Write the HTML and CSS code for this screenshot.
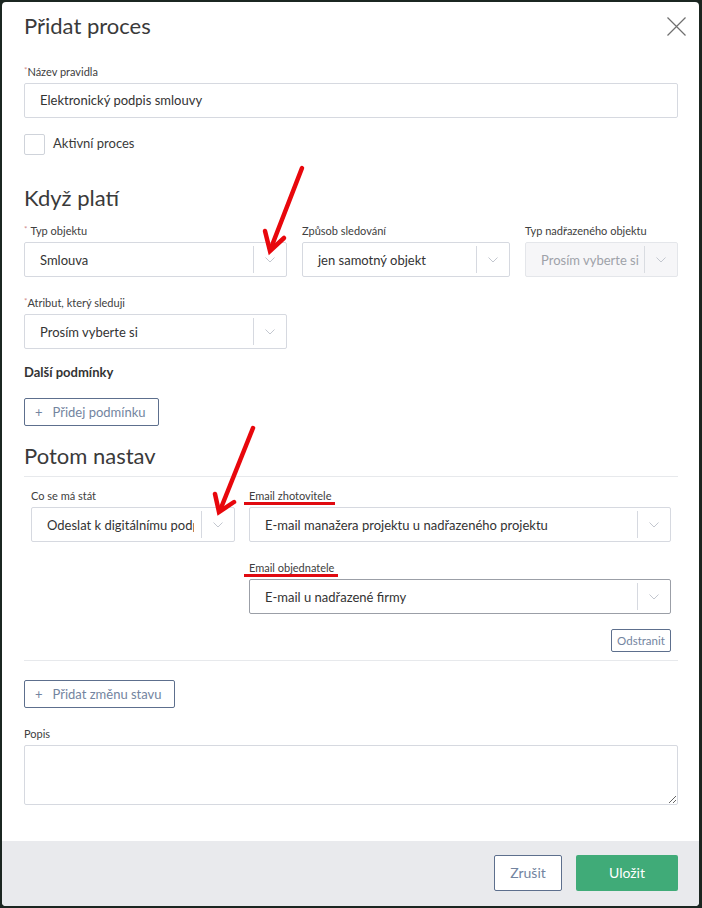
FILE: index.html
```html
<!DOCTYPE html>
<html lang="cs">
<head>
<meta charset="utf-8">
<title>Přidat proces</title>
<link rel="stylesheet" href="styles.css">
</head>
<body>
<div class="modal">
  <div class="modal-body">
    <div class="modal-head">
      <h1 class="title">Přidat proces</h1>
      <span class="close" aria-label="Zavřít">
        <svg width="19" height="19" viewBox="0 0 19 19"><path d="M0.5 0.5 L18.5 18.5 M18.5 0.5 L0.5 18.5" stroke="#6f6f6f" stroke-width="1.2" fill="none"/></svg>
      </span>
    </div>

    <div class="field f-name">
      <label class="lbl"><span class="req">*</span>Název pravidla</label>
      <div class="input">Elektronický podpis smlouvy</div>
    </div>

    <div class="check-row">
      <span class="checkbox"></span>
      <span class="check-label">Aktivní proces</span>
    </div>

    <h2 class="section">Když platí</h2>

    <div class="grid3">
      <div class="field">
        <label class="lbl"><span class="req sp">*</span>Typ objektu</label>
        <div class="select"><span class="val">Smlouva</span><span class="sep"></span><span class="chev"><svg width="10" height="6" viewBox="0 0 10 6"><path d="M0.5 0.5 L5 5 L9.5 0.5" stroke="#c3c7cf" fill="none"/></svg></span></div>
      </div>
      <div class="field">
        <label class="lbl">Způsob sledování</label>
        <div class="select"><span class="val">jen samotný objekt</span><span class="sep"></span><span class="chev"><svg width="10" height="6" viewBox="0 0 10 6"><path d="M0.5 0.5 L5 5 L9.5 0.5" stroke="#c3c7cf" fill="none"/></svg></span></div>
      </div>
      <div class="field">
        <label class="lbl">Typ nadřazeného objektu</label>
        <div class="select disabled"><span class="val">Prosím vyberte si</span><span class="sep"></span><span class="chev"><svg width="10" height="6" viewBox="0 0 10 6"><path d="M0.5 0.5 L5 5 L9.5 0.5" stroke="#c3c7cf" fill="none"/></svg></span></div>
      </div>
    </div>

    <div class="field f-attr">
      <label class="lbl"><span class="req">*</span>Atribut, který sleduji</label>
      <div class="select"><span class="val">Prosím vyberte si</span><span class="sep"></span><span class="chev"><svg width="10" height="6" viewBox="0 0 10 6"><path d="M0.5 0.5 L5 5 L9.5 0.5" stroke="#c3c7cf" fill="none"/></svg></span></div>
    </div>

    <h3 class="sub">Další podmínky</h3>
    <button class="btn-outline btn-add cond">+<span>Přidej podmínku</span></button>

    <h2 class="section s-then">Potom nastav</h2>
    <div class="rule"></div>

    <div class="action">
      <div class="field">
        <label class="lbl">Co se má stát</label>
        <div class="select"><span class="val clip">Odeslat k digitálnímu podpisu</span><span class="sep"></span><span class="chev"><svg width="10" height="6" viewBox="0 0 10 6"><path d="M0.5 0.5 L5 5 L9.5 0.5" stroke="#c3c7cf" fill="none"/></svg></span></div>
      </div>
      <div class="action-right">
        <div class="field">
          <label class="lbl marked">Email zhotovitele</label>
          <div class="select"><span class="val">E-mail manažera projektu u nadřazeného projektu</span><span class="sep"></span><span class="chev"><svg width="10" height="6" viewBox="0 0 10 6"><path d="M0.5 0.5 L5 5 L9.5 0.5" stroke="#c3c7cf" fill="none"/></svg></span></div>
        </div>
        <div class="field f-obj">
          <label class="lbl marked">Email objednatele</label>
          <div class="select hover"><span class="val">E-mail u nadřazené firmy</span><span class="sep"></span><span class="chev"><svg width="10" height="6" viewBox="0 0 10 6"><path d="M0.5 0.5 L5 5 L9.5 0.5" stroke="#c3c7cf" fill="none"/></svg></span></div>
        </div>
        <div class="remove-row"><button class="btn-outline btn-small">Odstranit</button></div>
      </div>
    </div>
    <div class="rule"></div>

    <button class="btn-outline btn-add state">+<span>Přidat změnu stavu</span></button>

    <div class="field f-desc">
      <label class="lbl">Popis</label>
      <textarea class="textarea"></textarea>
    </div>
  </div>

  <div class="modal-footer">
    <button class="btn-outline btn-cancel">Zrušit</button>
    <button class="btn-save">Uložit</button>
  </div>
</div>

<svg class="arrows" width="702" height="908" viewBox="0 0 702 908">
  <g stroke="#e8070c" stroke-width="4.5" fill="none" stroke-linecap="round" stroke-linejoin="miter">
    <path d="M302 168 L271 248"/>
    <path d="M265 231 L270 251 L284 238"/>
    <path d="M253 428 L221 508"/>
    <path d="M215 494 L219 512 L234 502"/>
  </g>
</svg>
</body>
</html>
```
FILE: styles.css
```css
* { box-sizing: border-box; }

html, body {
  margin: 0;
  padding: 0;
}

body {
  width: 702px;
  height: 908px;
  background: #1b2621;
  font-family: Lato, "Open Sans", "Liberation Sans", sans-serif;
  color: #333;
  position: relative;
  overflow: hidden;
}

.modal {
  margin: 2px 3px 0 2px;
  width: 697px;
  height: 904px;
  background: #fff;
  border-radius: 4px;
  display: flex;
  flex-direction: column;
  overflow: hidden;
}

.modal-body {
  flex: 1;
  padding: 11px 21px 0 22px;
}

.modal-head {
  display: flex;
  justify-content: space-between;
  align-items: center;
  height: 26px;
}

.title {
  margin: 0;
  font-size: 22px;
  line-height: 26px;
  font-weight: 400;
  color: #3a3a3a;
}

.close {
  display: block;
  width: 19px;
  height: 19px;
  margin-right: -8px;
  margin-top: 1px;
}
.close svg { display: block; }

.field { display: flex; flex-direction: column; }

.lbl {
  font-size: 11px;
  line-height: 14px;
  color: #404040;
  margin-bottom: 4px;
  display: block;
  white-space: nowrap;
}

.req {
  color: #d08a8a;
  font-size: 8px;
  vertical-align: top;
  line-height: 10px;
}
.req.sp { margin-right: 3px; }

.f-name { margin-top: 26px; }

.input {
  height: 35px;
  border: 1px solid #d6d9e0;
  border-radius: 2px;
  padding: 0 15px;
  font-size: 13px;
  line-height: 33px;
  color: #333;
}

.check-row {
  margin-top: 16px;
  display: flex;
  align-items: center;
  height: 21px;
}
.checkbox {
  width: 21px;
  height: 21px;
  border: 1px solid #cfd3da;
  border-radius: 2px;
  display: block;
}
.check-label {
  margin-left: 8px;
  font-size: 13px;
  color: #3a3a3a;
  position: relative;
  top: -2px;
}

.section {
  margin: 30px 0 0 0;
  font-size: 22px;
  line-height: 26px;
  font-weight: 400;
  color: #3a3a3a;
}

.grid3 {
  margin-top: 13px;
  display: grid;
  grid-template-columns: 263px 208px 1fr;
  column-gap: 15px;
}

.select {
  height: 35px;
  border: 1px solid #d6d9e0;
  border-radius: 2px;
  display: flex;
  align-items: center;
  background: #fff;
}
.select .val {
  flex: 1;
  min-width: 0;
  padding-left: 15px;
  font-size: 13px;
  color: #333;
  white-space: nowrap;
  overflow: hidden;
}
.select .val.clip {
  text-overflow: clip;
  margin-right: 7px;
}
.select .sep {
  width: 1px;
  height: 27px;
  background: #d6d9e0;
}
.select .chev {
  width: 32px;
  display: flex;
  justify-content: center;
  align-items: center;
  padding-top: 1px;
}
.select .chev svg { display: block; }

.select.disabled {
  background: #f6f6f8;
  border-color: #e4e6ea;
}
.select.disabled .val { color: #9ea2a9; }
.select.disabled .sep { background: #d9dce1; }

.select.hover { border-color: #9b9fa7; }

.f-attr {
  margin-top: 19px;
  width: 263px;
}

.sub {
  margin: 15px 0 0 0;
  font-size: 13px;
  line-height: 16px;
  font-weight: 700;
  color: #333;
}

.btn-outline {
  font-family: Lato, "Open Sans", "Liberation Sans", sans-serif;
  background: #fff;
  border: 1px solid #5d6f8d;
  border-radius: 2px;
  color: #7384a0;
  cursor: pointer;
}

.btn-add {
  display: flex;
  align-items: center;
  height: 28px;
  padding: 0 12px 0 10px;
  font-size: 13px;
  white-space: nowrap;
}
.btn-add span { margin-left: 10px; }
.btn-add.cond { margin-top: 18px; }
.btn-add.state { margin-top: 19px; }

.s-then { margin-top: 17px; }

.rule {
  height: 1px;
  background: #e7e9ec;
}
.s-then + .rule { margin-top: 7px; }

.action {
  padding: 12px 7px 8px 7px;
  display: grid;
  grid-template-columns: 204px 1fr;
  column-gap: 14px;
  align-items: start;
}

.action-right { display: flex; flex-direction: column; }

.marked { position: relative; align-self: flex-start; }
.marked::after {
  content: "";
  position: absolute;
  left: -5px;
  right: -4px;
  bottom: -2px;
  height: 3px;
  background: #e00a10;
}

.f-obj { margin-top: 19px; }

.remove-row {
  margin-top: 15px;
  display: flex;
  justify-content: flex-end;
}
.btn-small {
  height: 23px;
  width: 60px;
  padding: 0;
  font-size: 11.5px;
  color: #7384a0;
}

.f-desc { margin-top: 19px; }

.textarea {
  height: 60px;
  border: 1px solid #d6d9e0;
  border-radius: 2px;
  resize: vertical;
  font-family: Lato, "Open Sans", "Liberation Sans", sans-serif;
  display: block;
  width: 100%;
}

.modal-footer {
  height: 65px;
  background: #e9eaed;
  display: flex;
  justify-content: flex-end;
  align-items: center;
  padding: 0 21px 2px 0;
  gap: 14px;
}

.btn-cancel {
  height: 36px;
  width: 68px;
  font-size: 14px;
  padding: 0;
}

.btn-save {
  height: 36px;
  width: 102px;
  border: none;
  border-radius: 2px;
  background: #40ab78;
  color: #fff;
  font-size: 14px;
  font-family: Lato, "Open Sans", "Liberation Sans", sans-serif;
  padding: 0;
}

.arrows {
  position: absolute;
  top: 0;
  left: 0;
  pointer-events: none;
}
```
